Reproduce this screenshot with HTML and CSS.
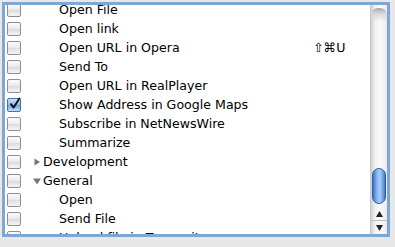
FILE: index.html
```html
<!DOCTYPE html>
<html>
<head>
<meta charset="utf-8">
<link rel="stylesheet" href="styles.css">
</head>
<body>
<div class="frame">
  <div class="list">
    <div class="rows">
      <div class="row"><span class="cb"></span><span class="item">Open File</span></div>
      <div class="row"><span class="cb"></span><span class="item">Open link</span></div>
      <div class="row"><span class="cb"></span><span class="item">Open URL in Opera</span><span class="key">⇧⌘U</span></div>
      <div class="row"><span class="cb"></span><span class="item">Send To</span></div>
      <div class="row"><span class="cb"></span><span class="item">Open URL in RealPlayer</span></div>
      <div class="row"><span class="cb checked"><svg viewBox="0 0 14 14" width="14" height="14"><path d="M3 7.2 L5.6 10.6 L11.4 1.6" fill="none" stroke="#111" stroke-width="1.9" stroke-linecap="round" stroke-linejoin="round"/></svg></span><span class="item">Show Address in Google Maps</span></div>
      <div class="row"><span class="cb"></span><span class="item">Subscribe in NetNewsWire</span></div>
      <div class="row"><span class="cb"></span><span class="item">Summarize</span></div>
      <div class="row"><span class="cb"></span><span class="tri"><svg viewBox="0 0 8 8" width="8" height="8"><path d="M1.5 0.5 L7 4 L1.5 7.5 Z" fill="#777"/></svg></span><span class="group">Development</span></div>
      <div class="row"><span class="cb"></span><span class="tri"><svg viewBox="0 0 8 8" width="8" height="8"><path d="M0 1.5 L8 1.5 L4 7.5 Z" fill="#777"/></svg></span><span class="group">General</span></div>
      <div class="row"><span class="cb"></span><span class="item">Open</span></div>
      <div class="row"><span class="cb"></span><span class="item">Send File</span></div>
      <div class="row"><span class="cb"></span><span class="item">Upload file in Transmit</span></div>
    </div>
  </div>
  <div class="scrollbar">
    <div class="track">
      <div class="cap"></div>
      <div class="thumb"></div>
    </div>
    <div class="btn up"><svg viewBox="0 0 7 6" width="7" height="6"><path d="M3.5 0 L7 6 L0 6 Z" fill="#222"/></svg></div>
    <div class="btn down"><svg viewBox="0 0 7 6" width="7" height="6"><path d="M0 0 L7 0 L3.5 6 Z" fill="#222"/></svg></div>
  </div>
</div>
</body>
</html>
```

FILE: styles.css
```css
html, body {
  margin: 0;
  padding: 0;
  background: #e8e8e8;
}
body {
  width: 395px;
  height: 247px;
  overflow: hidden;
  font-family: "DejaVu Sans", sans-serif;
  font-size: 12.6px;
  color: #000;
}
.frame {
  margin: 2px 0 0 2px;
  width: 388px;
  height: 235px;
  box-sizing: border-box;
  border: 3px solid #7fa7d6;
  box-shadow: inset 0 0 0 1px #a9c3e2;
  background: #fff;
  display: flex;
  overflow: hidden;
}
.list {
  flex: 1;
  overflow: hidden;
  background: #fff;
}
.rows {
  margin-top: -5px;
}
.row {
  height: 19px;
  display: flex;
  align-items: center;
  padding-left: 2px;
  white-space: nowrap;
}
.cb {
  width: 14px;
  height: 14px;
  box-sizing: border-box;
  border: 1px solid #8e8e8e;
  border-radius: 2px;
  background: linear-gradient(#fdfdfd, #e9e9e9 50%, #dcdcdc 51%, #f6f6f6);
  flex: none;
  position: relative;
}
.cb.checked {
  border-color: #4a6f9e;
  background: linear-gradient(#cfe3f8, #8ab8e9 50%, #6aa3e0 51%, #bfe0fb);
}
.cb svg {
  position: absolute;
  left: 0;
  top: -2px;
}
.item {
  margin-left: 38px;
}
.key {
  margin-left: auto;
  margin-right: 24px;
  width: 33px;
  font-size: 12.6px;
}
.tri {
  margin-left: 12px;
  width: 10px;
  display: flex;
  align-items: center;
}
.scrollbar {
  width: 16px;
  flex: none;
  display: flex;
  flex-direction: column;
  background: linear-gradient(90deg, #d2d2d2, #f1f1f1 25%, #fbfbfb 55%, #ececec);
  border-left: 1px solid #c8c8c8;
}
.track {
  flex: 1;
  position: relative;
}
.cap {
  height: 14px;
  margin-top: 3px;
  border-radius: 7px 7px 0 0;
  background: linear-gradient(#a9a9a9, #d8d8d8 40%, transparent);
}
.thumb {
  position: absolute;
  left: 1px;
  right: 1px;
  top: 163px;
  height: 36px;
  border-radius: 7px;
  border: 1px solid #2f5ea8;
  box-sizing: border-box;
  background: linear-gradient(90deg, #3f74c8, #7fb0ee 30%, #a9d0f8 55%, #6c9fe3 85%, #3e72c4);
}
.btn {
  height: 13px;
  display: flex;
  align-items: center;
  justify-content: center;
}
.btn.up {
  border-bottom: 1px solid #bdbdbd;
}
```
